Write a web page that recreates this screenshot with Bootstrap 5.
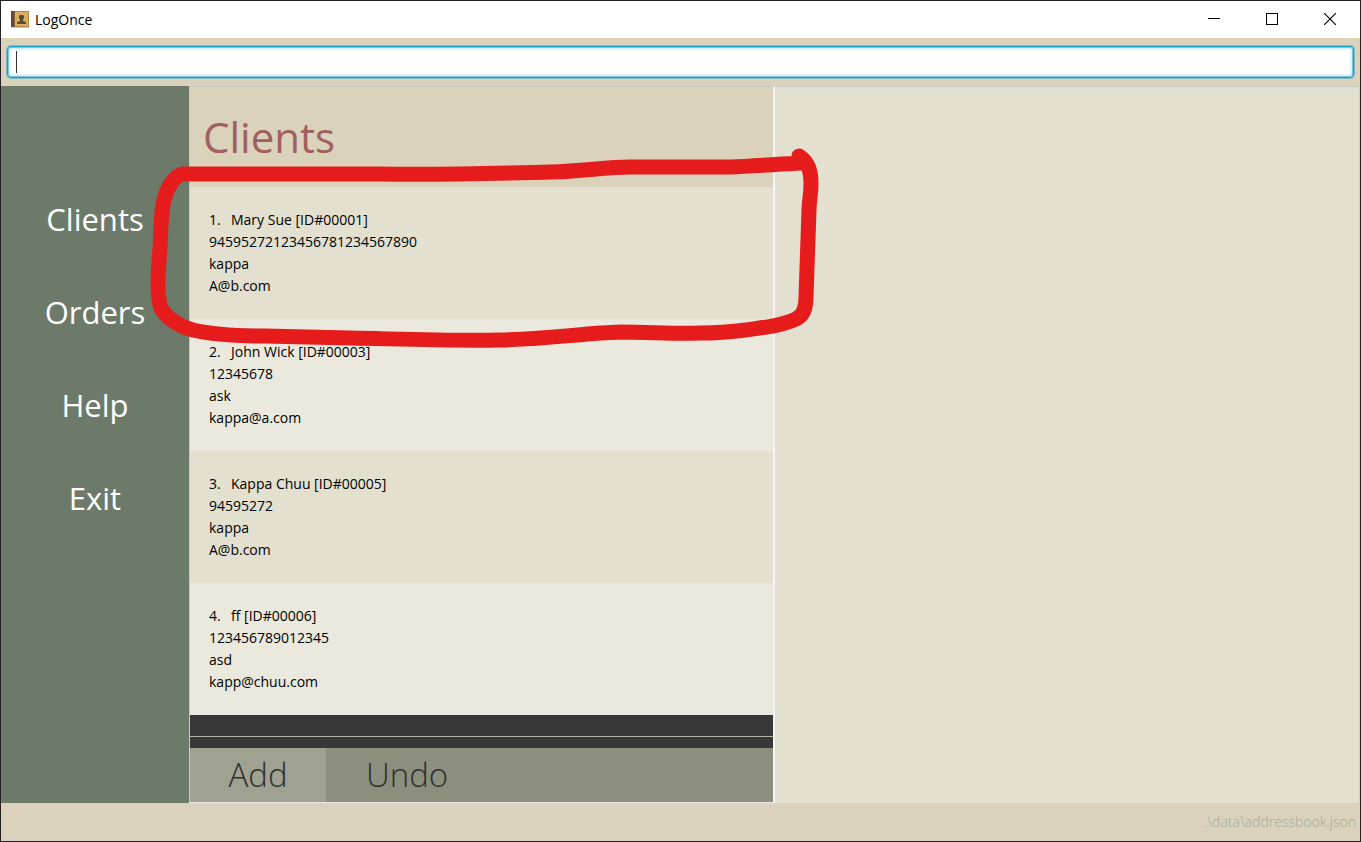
<!DOCTYPE html>
<html lang="en">
<head>
<meta charset="utf-8">
<meta name="viewport" content="width=device-width, initial-scale=1">
<title>LogOnce</title>
<link href="https://cdn.jsdelivr.net/npm/bootstrap@5.3.0/dist/css/bootstrap.min.css" rel="stylesheet">
<style>
  body { font-family: "Open Sans", "Noto Sans", sans-serif; font-size: 14px; line-height: 22px; color: #000; }
  .app-window { border: 1px solid #262223; background: #dad2ba; }
  .title-bar { height: 37px; background: #fff; padding: 0 1px 0 10px; }
  .app-name { margin-left: 6px; }
  .window-btn { width: 58px; height: 36px; border: 0; background: none; padding: 0 0 3px; }
  .command-bar { padding: 8px 6px; }
  .command-input, .command-input:focus { height: 32px; border: 1px solid #10a0cc; border-radius: 4px; padding: 0 8px;
    background: #fff; box-shadow: inset 0 0 0 1px #7cc6e2, inset 0 0 2px 3px #dcf0fa, 0 0 0 1px #83bcc2; }
  .caret-line { left: 9px; top: 5px; width: 1px; height: 22px; background: #333; }
  .side-nav { width: 188px; background: #6e7a69; padding-top: 86px; }
  .side-btn { height: 93px; border: 0; background: none; color: #fff; font-size: 31px; line-height: 44px; padding: 0; }
  .pane { flex: 1 1 50%; min-width: 0; border-top: 1px solid #c9c9c9; background: #e3e0cf; }
  .list-pane { border-left: 1px solid #c9c9c9; border-right: 2px solid #f4f4f4; border-bottom: 1px solid #e6e8ea; background: #383838; }
  .detail-pane { border-right: 1px solid #cfcfc8; }
  .pane-title { height: 100px; background: #dad2ba; color: #a06060; font-size: 42px; line-height: 60px; padding: 20px 13px; margin: 0; font-weight: 400; }
  .client-item { background: #e3e0cf; padding: 22px 19px; }
  .client-item:nth-child(even) { background: #ebe9dd; }
  .client-no { width: 22px; }
  .list-rest { min-height: 22px; border-bottom: 1px solid #b4b5a0; margin-bottom: 11px; }
  .action-bar { background: #8c8f7e; height: 54px; }
  .action-btn { border: 0; background: none; color: #303030; font-size: 33px; line-height: 54px; font-weight: 300; padding: 0 40px; }
  .add-btn { background: #9fa290; width: 136px; padding: 0; }
  .status-bar { height: 38px; color: #a0a89f; font-weight: 300; padding-right: 4px; }
  .marker { left: 0; top: 0; pointer-events: none; }
</style>
</head>
<body>
<div class="app-window min-vh-100 d-flex flex-column">
  <header class="title-bar d-flex align-items-center">
    <svg width="18" height="17" viewBox="0 0 18 17" aria-hidden="true">
      <rect x="1" y="15" width="17" height="2" fill="#cfc8c0"/>
      <rect width="18" height="16" fill="#b28344"/>
      <rect x="4" y="1" width="13" height="14" fill="#dcae62"/>
      <rect width="3" height="16" fill="#5e4a3d"/>
      <rect x="3" width="1" height="16" fill="#856239"/>
      <path d="M9 4h3l1 1v2l-1 2v1l3 1v2H6v-2l3-1V9L8 7V5z" fill="#594b3b"/>
    </svg>
    <span class="app-name me-auto">LogOnce</span>
    <button class="window-btn" type="button" aria-label="Minimize"><svg width="12" height="12" shape-rendering="crispEdges"><path d="M0 5.500h12" stroke="#000"/></svg></button>
    <button class="window-btn" type="button" aria-label="Maximize"><svg width="12" height="12" shape-rendering="crispEdges"><rect x=".5" y=".5" width="11" height="11" fill="none" stroke="#000"/></svg></button>
    <button class="window-btn" type="button" aria-label="Close"><svg width="12" height="12"><path d="M0 0l12 12M12 0L0 12" stroke="#000" stroke-width="1.100"/></svg></button>
  </header>

  <div class="command-bar">
    <div class="position-relative">
      <input class="command-input form-control" type="text" aria-label="Command">
      <span class="caret-line position-absolute"></span>
    </div>
  </div>

  <main class="position-relative flex-grow-1 d-flex">
    <nav class="side-nav d-flex flex-column flex-shrink-0">
      <button class="side-btn" type="button">Clients</button>
      <button class="side-btn" type="button">Orders</button>
      <button class="side-btn" type="button">Help</button>
      <button class="side-btn" type="button">Exit</button>
    </nav>

    <section class="pane list-pane d-flex flex-column">
      <h1 class="pane-title">Clients</h1>
      <ul class="list-unstyled m-0">
        <li class="client-item">
          <div class="d-flex"><span class="client-no">1.</span><span>Mary Sue [ID#00001]</span></div>
          <div>94595272123456781234567890</div><div>kappa</div><div>A@b.com</div>
        </li>
        <li class="client-item">
          <div class="d-flex"><span class="client-no">2.</span><span>John Wick [ID#00003]</span></div>
          <div>12345678</div><div>ask</div><div>kappa@a.com</div>
        </li>
        <li class="client-item">
          <div class="d-flex"><span class="client-no">3.</span><span>Kappa Chuu [ID#00005]</span></div>
          <div>94595272</div><div>kappa</div><div>A@b.com</div>
        </li>
        <li class="client-item">
          <div class="d-flex"><span class="client-no">4.</span><span>ff [ID#00006]</span></div>
          <div>123456789012345</div><div>asd</div><div>kapp@chuu.com</div>
        </li>
      </ul>
      <div class="list-rest flex-grow-1"></div>
      <div class="action-bar d-flex">
        <button class="action-btn add-btn" type="button">Add</button>
        <button class="action-btn" type="button">Undo</button>
      </div>
    </section>

    <section class="pane detail-pane"></section>

    <!-- hand-drawn marker round the first client -->
    <svg class="marker position-absolute" width="830" height="270" viewBox="1 86 830 270" fill="none" stroke="#e61c1c" stroke-width="15" stroke-linecap="round" stroke-linejoin="round" aria-hidden="true">
      <path d="M799 156C808 162 811 170 811 184C811 196 809 200 809 210L806 297C806 309 803 316 796 319C783 325 768 327 746 330C730 332 715 333 700 333C675 334 650 332 620 332C585 333 550 339 500 340C450 341 400 339 350 338L265 336C235 336 210 334 193 330C175 325 162 314 160 305C157 292 158 270 160 250C161 235 160 215 164 200C167 187 175 175 183 174L380 174C450 175 510 173 550 172C585 171 605 167 630 167L730 167C755 166 780 164 801 163"/>
    </svg>
  </main>

  <footer class="status-bar d-flex align-items-center justify-content-end">.\data\addressbook.json</footer>
</div>
<script src="https://cdn.jsdelivr.net/npm/bootstrap@5.3.0/dist/js/bootstrap.bundle.min.js"></script>
</body>
</html>
